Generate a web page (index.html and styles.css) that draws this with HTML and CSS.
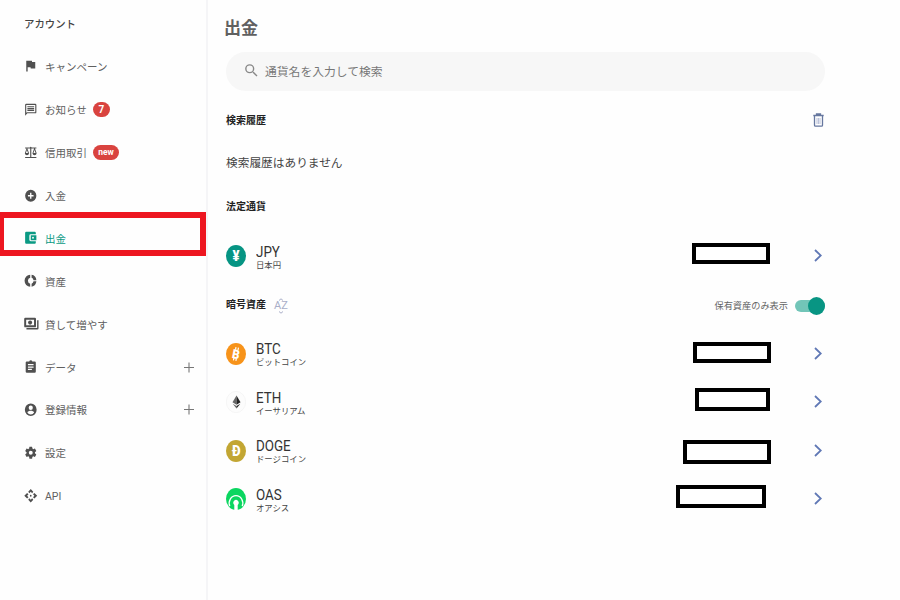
FILE: index.html
```html
<!DOCTYPE html>
<html lang="ja">
<head>
    <meta charset="UTF-8">
    <meta name="viewport" content="width=device-width, initial-scale=1.0">
    <title>出金</title>
    <link rel="stylesheet" href="styles.css">
</head>
<body>
    <div class="page">
        <nav class="sidebar">
            <h2 class="sidebar-title">アカウント</h2>
            <a class="nav-item">
                <svg class="icon" viewBox="0 0 24 24"><path d="M14.4 4L14 2H4v18h2.500v-7h5.100l.4 2h8V4z"/></svg>
                <span>キャンペーン</span>
            </a>
            <a class="nav-item">
                <svg class="icon" viewBox="0 0 24 24"><path d="M20 2H4a2 2 0 0 0-2 2v18l4-4h14a2 2 0 0 0 2-2V4a2 2 0 0 0-2-2zm0 14H5.200L4 17.200V4h16v12zM6 12h12v2H6zm0-3h12v2H6zm0-3h12v2H6z"/></svg>
                <span>お知らせ</span>
                <span class="badge badge-count">7</span>
            </a>
            <a class="nav-item">
                <svg class="icon" viewBox="0 0 24 24"><path d="M2 3h8.500a1.700 1.700 0 0 1 3 0H22v2h-2.500l3 8a3.800 3.800 0 0 1-7.500 0l3-8H13v14h9v2H2v-2h9V5H6l3 8a3.800 3.800 0 0 1-7.500 0l3-8H2zm3.200 4.500L3.400 12.500h3.700zm13.500 0l-1.800 5h3.700z"/></svg>
                <span>信用取引</span>
                <span class="badge badge-new">new</span>
            </a>
            <a class="nav-item">
                <svg class="icon" viewBox="0 0 24 24"><path d="M12 2a10 10 0 1 0 0 20 10 10 0 0 0 0-20zm5 11.200h-3.800V17h-2.400v-3.800H7v-2.400h3.800V7h2.400v3.800H17z"/></svg>
                <span>入金</span>
            </a>
            <a class="nav-item active">
                <svg class="icon" viewBox="0 0 24 24"><path fill-rule="evenodd" d="M4 2h15a2 2 0 0 1 2 2v2h-9a2.500 2.500 0 0 0-2.500 2.500v7A2.500 2.500 0 0 0 12 18h9v2a2 2 0 0 1-2 2H4a2 2 0 0 1-2-2V4a2 2 0 0 1 2-2zm8 6h10v8H12zm4 2.300a1.600 1.600 0 1 0 0 3.300 1.600 1.600 0 0 0 0-3.300z"/></svg>
                <span>出金</span>
            </a>
            <a class="nav-item">
                <svg class="icon" viewBox="0 0 24 24"><path d="M11 2v5.100a5 5 0 0 0 0 9.800V22a10 10 0 0 1 0-20zm2.500 0v5.100a5 5 0 0 1 3.400 3.900H22A10 10 0 0 0 13.500 2zm0 14.900V22a10 10 0 0 0 8.500-9h-5.100a5 5 0 0 1-3.400 3.900z"/></svg>
                <span>資産</span>
            </a>
            <a class="nav-item">
                <svg class="icon icon-wide" viewBox="0 0 26 24"><path fill-rule="evenodd" d="M2 2h17a2 2 0 0 1 2 2v12a2 2 0 0 1-2 2H2a2 2 0 0 1-2-2V4a2 2 0 0 1 2-2zm1.500 3.500v9h14v-9zM23 6h2.500v13.500a2 2 0 0 1-2 2H4v-2.200h19z"/><circle cx="10.500" cy="10" r="3.600"/></svg>
                <span>貸して増やす</span>
            </a>
            <a class="nav-item">
                <svg class="icon" viewBox="0 0 24 24"><path d="M19 3h-4.200a3 3 0 0 0-5.600 0H5a2 2 0 0 0-2 2v15a2 2 0 0 0 2 2h14a2 2 0 0 0 2-2V5a2 2 0 0 0-2-2zm-5 14.500H7v-2h7zm3-4H7v-2h10zm0-4H7v-2h10z"/></svg>
                <span>データ</span>
                <svg class="plus" viewBox="0 0 10 10"><path d="M5 0v10M0 5h10"/></svg>
            </a>
            <a class="nav-item">
                <svg class="icon" viewBox="0 0 24 24"><path fill-rule="evenodd" d="M12 1.500a10.500 10.500 0 1 0 0 21 10.500 10.500 0 0 0 0-21zM12 5a3.700 3.700 0 1 1 0 7.400A3.700 3.700 0 0 1 12 5zm0 15a7.200 7.200 0 0 1-6-3.300c0-2 4-3 6-3s6 1 6 3A7.200 7.200 0 0 1 12 20z"/></svg>
                <span>登録情報</span>
                <svg class="plus" viewBox="0 0 10 10"><path d="M5 0v10M0 5h10"/></svg>
            </a>
            <a class="nav-item">
                <svg class="icon" viewBox="0 0 24 24"><path d="M19.430 12.980c.040-.320.070-.640.070-.980s-.030-.660-.070-.980l2.110-1.650c.190-.150.240-.420.120-.640l-2-3.460c-.120-.220-.390-.300-.610-.220l-2.490 1c-.520-.400-1.080-.730-1.690-.980l-.380-2.650C14.460 2.180 14.250 2 14 2h-4c-.250 0-.460.180-.490.420l-.380 2.650c-.610.250-1.170.590-1.690.980l-2.490-1c-.230-.090-.490 0-.610.220l-2 3.460c-.130.220-.070.490.120.640l2.110 1.650c-.040.320-.070.650-.070.980s.030.660.070.980l-2.110 1.650c-.190.150-.240.420-.120.640l2 3.460c.120.220.390.300.610.220l2.490-1c.520.400 1.080.730 1.690.980l.380 2.650c.030.240.240.420.490.420h4c.250 0 .460-.180.490-.420l.380-2.650c.610-.250 1.170-.590 1.690-.980l2.490 1c.230.090.490 0 .610-.220l2-3.460c.120-.220.070-.490-.120-.640zM12 15.500a3.500 3.500 0 1 1 0-7 3.500 3.500 0 0 1 0 7z"/></svg>
                <span>設定</span>
            </a>
            <a class="nav-item">
                <svg class="icon" viewBox="0 0 24 24"><path d="M7.500 5.500L12 .500l4.500 5L14.500 8 12 5.500 9.500 8zM7.500 18.500l4.500 5 4.500-5-2-2.500-2.500 2.500L9.500 16zM5.500 7.500L.500 12l5 4.500L8 14.500 5.500 12 8 9.500zM18.500 7.500l5 4.500-5 4.500-2.500-2 2.500-2.500L16 9.500z"/><circle cx="12" cy="12" r="1.500"/></svg>
                <span>API</span>
            </a>
        </nav>

        <main class="content">
            <h1 class="title">出金</h1>
            <div class="search">
                <svg class="search-icon" viewBox="0 0 24 24"><path d="M15.500 14h-.790l-.280-.270A6.470 6.470 0 0 0 16 9.500 6.500 6.500 0 1 0 9.500 16c1.610 0 3.090-.590 4.230-1.570l.270.280v.790l5 4.990L20.490 19zm-6 0a4.500 4.500 0 1 1 0-9 4.500 4.500 0 0 1 0 9z"/></svg>
                <span>通貨名を入力して検索</span>
            </div>

            <div class="section-head">
                <h3>検索履歴</h3>
                <svg class="trash" viewBox="0 0 11 14"><path d="M.300 2.500h10.400M3.500 2.200V1h4v1.200M1.500 3v9.200q0 1 1 1h6q1 0 1-1V3"/><path class="thin" d="M4 5v6M5.500 5v6M7 5v6"/></svg>
            </div>
            <p class="empty">検索履歴はありません</p>

            <div class="section-head fiat-head">
                <h3>法定通貨</h3>
            </div>
            <div class="row">
                <svg class="coin" viewBox="0 0 20 20" preserveAspectRatio="none">
                    <circle cx="10" cy="10" r="10" fill="#069483"/>
                    <text x="10" y="14.500" class="coin-text">¥</text>
                </svg>
                <div class="names"><b>JPY</b><small>日本円</small></div>
                <div class="mask mask-jpy"></div>
                <svg class="chevron" viewBox="0 0 8 13"><path d="M1 1l5.800 5.500L1 12"/></svg>
            </div>

            <div class="section-head crypto-head">
                <h3>暗号資産</h3>
                <span class="sort">AZ
                    <svg class="sort-marks" viewBox="0 0 14 16"><path d="M5 2.500L7 .800l2 1.700M5 13.500l2 1.700 2-1.700"/></svg>
                </span>
                <span class="toggle-label">保有資産のみ表示</span>
                <span class="toggle"></span>
            </div>
            <div class="row">
                <svg class="coin" viewBox="0 0 20 20" preserveAspectRatio="none">
                    <circle cx="10" cy="10" r="10" fill="#f7931a"/>
                    <g transform="rotate(12 10 10)">
                        <text x="10" y="14.200" class="coin-text coin-btc">B</text>
                        <path d="M8.700 3.800v2.500M11.200 3.800v2.500M8.700 13.800v2.400M11.200 13.800v2.400" stroke="#fff" stroke-width="1.200"/>
                    </g>
                </svg>
                <div class="names"><b>BTC</b><small>ビットコイン</small></div>
                <div class="mask mask-btc"></div>
                <svg class="chevron" viewBox="0 0 8 13"><path d="M1 1l5.800 5.500L1 12"/></svg>
            </div>
            <div class="row">
                <svg class="coin" viewBox="0 0 20 20" preserveAspectRatio="none">
                    <circle cx="10" cy="10" r="9.700" fill="#fcfcfc" stroke="#f1f1f1" stroke-width=".6"/>
                    <path d="M10.500 4L6.500 10.300l4 2.100z" fill="#666"/>
                    <path d="M10.500 4l4 6.300-4 2.100z" fill="#222"/>
                    <path d="M6.700 11.500l3.800 2.100V16z" fill="#666"/>
                    <path d="M14.300 11.500l-3.800 2.100V16z" fill="#222"/>
                </svg>
                <div class="names"><b>ETH</b><small>イーサリアム</small></div>
                <div class="mask mask-eth"></div>
                <svg class="chevron" viewBox="0 0 8 13"><path d="M1 1l5.800 5.500L1 12"/></svg>
            </div>
            <div class="row">
                <svg class="coin" viewBox="0 0 20 20" preserveAspectRatio="none">
                    <circle cx="10" cy="10" r="10" fill="#c2a633"/>
                    <text x="10.300" y="14.800" class="coin-text">Ð</text>
                </svg>
                <div class="names"><b>DOGE</b><small>ドージコイン</small></div>
                <div class="mask mask-doge"></div>
                <svg class="chevron" viewBox="0 0 8 13"><path d="M1 1l5.800 5.500L1 12"/></svg>
            </div>
            <div class="row">
                <svg class="coin" viewBox="0 0 20 20" preserveAspectRatio="none">
                    <circle cx="10" cy="10" r="10" fill="#0bd660"/>
                    <path d="M3.800 16.500A6.800 6.800 0 1 1 16.200 16.500" fill="none" stroke="#fff" stroke-width="1.300"/>
                    <path d="M8.300 20v-4.600a2.600 2.600 0 1 1 3.400 0V20z" fill="#fff"/>
                </svg>
                <div class="names"><b>OAS</b><small>オアシス</small></div>
                <div class="mask mask-oas"></div>
                <svg class="chevron" viewBox="0 0 8 13"><path d="M1 1l5.800 5.500L1 12"/></svg>
            </div>
        </main>
    </div>
</body>
</html>
```
FILE: styles.css
```css
*, *::after {
    box-sizing: border-box;
}

body {
    margin: 0;
    background-color: #fefefe;
    font-family: Roboto, "Noto Sans CJK JP", sans-serif;
    color: #333;
}

h1, h2, h3, p {
    margin: 0;
}

.page {
    display: flex;
    height: 600px;
    overflow: hidden;
}

/* sidebar */
.sidebar {
    width: 208px;
    padding-top: 2px;
    border-right: 2px solid #f5f5f7;
}

.sidebar-title {
    height: 43px;
    padding-left: 24px;
    font-size: 10.4px;
    font-weight: 500;
    line-height: 45px;
    color: #444;
}

.nav-item {
    position: relative;
    display: flex;
    align-items: center;
    height: 42.950px;
    padding: 0 12px 0 24px;
    font-size: 10.5px;
    line-height: 16px;
    white-space: nowrap;
    color: #606060;
}

.nav-item span:not(.badge) {
    padding-top: 3px;
}

.icon {
    flex: none;
    width: 13.5px;
    height: 13.5px;
    margin-right: 7.5px;
    fill: #505050;
    transform: scaleY(1.06);
}

.icon-wide {
    width: 15px;
    margin-right: 6px;
}

.plus {
    width: 10px;
    height: 11px;
    margin-left: auto;
    stroke: #777;
    stroke-width: 1.1;
}

.active {
    color: #0b9a84;
}

.active .icon {
    fill: #0b9a84;
}

.active::after {
    content: "";
    position: absolute;
    left: 0;
    top: -5px;
    width: 206px;
    height: 44px;
    border: 6px solid #ed1620;
    border-left-width: 4px;
}

.badge {
    margin-left: 6px;
    height: 15px;
    border-radius: 8px;
    background-color: #d9433f;
    color: #fff;
    font-weight: 700;
    line-height: 15px;
    text-align: center;
}

.badge-count {
    width: 17px;
    font-size: 10px;
}

.badge-new {
    width: 26px;
    font-size: 8.5px;
    line-height: 14px;
}

/* main column */
.content {
    width: 617px;
    padding: 16px 0 0 18px;
}

.title {
    height: 24px;
    margin-left: -2px;
    font-size: 17px;
    font-weight: 700;
    line-height: 24px;
    color: #606060;
}

.search {
    display: flex;
    align-items: center;
    height: 39px;
    margin: 12px 0 0;
    padding: 0 0 2px 17px;
    border-radius: 20px;
    background-color: #f7f7f7;
    font-size: 11.8px;
    color: #777;
}

.search-icon {
    width: 17px;
    height: 17px;
    margin-right: 5px;
    fill: #888;
}

.section-head {
    display: flex;
    align-items: center;
    height: 20px;
    margin-top: 19px;
}

.section-head h3 {
    margin-bottom: 2px;
    font-size: 10px;
    font-weight: 700;
    color: #222;
}

.trash {
    width: 11px;
    height: 14px;
    margin: 0 1px 0 auto;
    fill: none;
    stroke: #66779f;
    stroke-width: 1.3;
}

.trash .thin {
    stroke: #a9b2d0;
    stroke-width: .8;
}

.empty {
    height: 20px;
    margin-top: 23px;
    font-size: 11.7px;
    line-height: 20px;
    color: #444;
}

.fiat-head {
    margin: 23px 0 16px;
}

.crypto-head {
    margin: 14px 0 15px;
}

.sort {
    position: relative;
    margin-left: 8px;
    padding-top: 2px;
    font-size: 11px;
    line-height: 16px;
    color: #a9aec8;
}

.sort-marks {
    position: absolute;
    left: 0;
    top: 2px;
    width: 14px;
    height: 16px;
    fill: none;
    stroke: #a9aec8;
}

.toggle-label {
    margin-left: auto;
    font-size: 9.2px;
    color: #666;
}

.toggle {
    position: relative;
    width: 30px;
    height: 12px;
    margin: 2px 0 0 7px;
    border-radius: 6px;
    background-color: #72c5b8;
}

.toggle::after {
    content: "";
    position: absolute;
    right: 0;
    top: -3px;
    width: 17px;
    height: 18px;
    border-radius: 50%;
    background-color: #089583;
}

.row {
    display: flex;
    align-items: center;
    height: 48.500px;
}

.coin {
    flex: none;
    width: 20px;
    height: 22px;
}

.coin-text {
    fill: #fff;
    font-family: Roboto, sans-serif;
    font-size: 13px;
    font-weight: 900;
    text-anchor: middle;
}

.coin-btc {
    font-size: 11.5px;
}

.names {
    display: flex;
    flex-direction: column;
    margin-left: 10px;
    padding-top: 3px;
}

.names b {
    font-size: 13.4px;
    font-weight: 400;
    line-height: 15px;
    color: #333;
    transform: scaleY(1.08);
}

.names small {
    font-size: 8.400px;
    line-height: 11px;
    color: #444;
}

/* hidden balances */
.mask {
    margin-left: auto;
    border: 4px solid #000;
    background-color: #fff;
}

.mask-jpy {
    width: 78px;
    height: 21px;
    margin-right: 44px;
    margin-bottom: 5px;
}

.mask-btc {
    width: 78px;
    height: 21px;
    margin-right: 43px;
    margin-bottom: 3px;
}

.mask-eth {
    width: 75px;
    height: 23px;
    margin-right: 44px;
    margin-bottom: 5px;
}

.mask-doge {
    width: 88px;
    height: 24px;
    margin-right: 43px;
    margin-top: 3px;
}

.mask-oas {
    width: 90px;
    height: 23px;
    margin-right: 48px;
    margin-bottom: 6px;
}

.chevron {
    flex: none;
    width: 8px;
    height: 13px;
    margin: 0 3px 1px 0;
    fill: none;
    stroke: #6078b5;
    stroke-width: 1.8;
}
```
